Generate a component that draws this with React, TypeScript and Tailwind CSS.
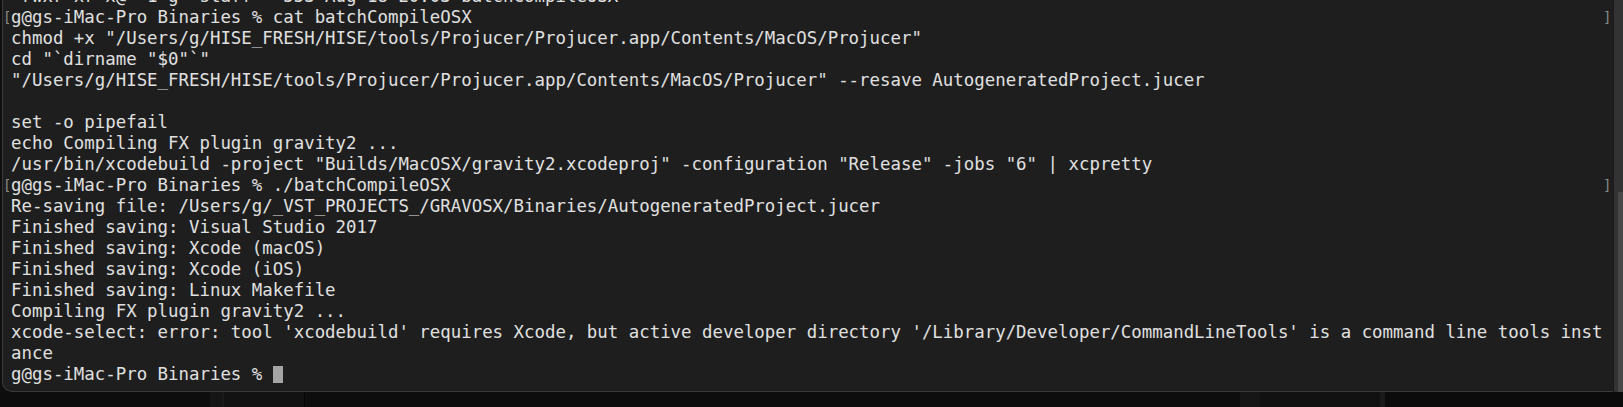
import React from 'react';

interface Line {
  text: string;
  mark?: boolean;
  cursor?: boolean;
}

const lines: Line[] = [
  { text: '-rwxr-xr-x@  1 g  staff   553 Aug 18 20:03 batchCompileOSX' },
  { text: 'g@gs-iMac-Pro Binaries % cat batchCompileOSX', mark: true },
  { text: 'chmod +x "/Users/g/HISE_FRESH/HISE/tools/Projucer/Projucer.app/Contents/MacOS/Projucer"' },
  { text: 'cd "`dirname "$0"`"' },
  {
    text: '"/Users/g/HISE_FRESH/HISE/tools/Projucer/Projucer.app/Contents/MacOS/Projucer" --resave AutogeneratedProject.jucer',
  },
  { text: '' },
  { text: 'set -o pipefail' },
  { text: 'echo Compiling FX plugin gravity2 ...' },
  {
    text: '/usr/bin/xcodebuild -project "Builds/MacOSX/gravity2.xcodeproj" -configuration "Release" -jobs "6" | xcpretty',
  },
  { text: 'g@gs-iMac-Pro Binaries % ./batchCompileOSX', mark: true },
  { text: 'Re-saving file: /Users/g/_VST_PROJECTS_/GRAVOSX/Binaries/AutogeneratedProject.jucer' },
  { text: 'Finished saving: Visual Studio 2017' },
  { text: 'Finished saving: Xcode (macOS)' },
  { text: 'Finished saving: Xcode (iOS)' },
  { text: 'Finished saving: Linux Makefile' },
  { text: 'Compiling FX plugin gravity2 ...' },
  {
    text: "xcode-select: error: tool 'xcodebuild' requires Xcode, but active developer directory '/Library/Developer/CommandLineTools' is a command line tools inst",
  },
  { text: 'ance' },
  { text: 'g@gs-iMac-Pro Binaries % ', cursor: true },
];

export default function App() {
  return (
    <div className="w-[1623px] h-[407px] bg-[#0f0f0f] overflow-hidden flex flex-col">
      <div className="h-[392px] flex">
        {/* Terminal window */}
        <div className="ml-[2px] flex-1 bg-[#1e1e1e] rounded-bl-[10px] border-l border-b border-[#3a3a3a] overflow-hidden">
          <div
            className="-mt-[14px] pl-[8px] text-[#e0e0e0] text-[17.4px] leading-[21px]"
            style={{ fontFamily: '"DejaVu Sans Mono", "Liberation Mono", monospace' }}
          >
            {lines.map((line, i) => (
              <div key={i} className="relative h-[21px] whitespace-pre">
                {line.mark && (
                  <>
                    <span className="absolute -left-[8px] top-0 text-[14px] text-[#8a8a8a]">[</span>
                    <span className="absolute left-[1592px] top-0 text-[14px] text-[#8a8a8a]">]</span>
                  </>
                )}
                {line.text}
                {line.cursor && (
                  <span className="inline-block w-[10px] h-[17px] align-[-3px] bg-[#a5a5a5]" />
                )}
              </div>
            ))}
          </div>
        </div>
        {/* Window edge at right */}
        <div className="w-[10px] flex">
          <div className="w-[1px] bg-[#1a1a1a]" />
          <div className="flex-1 flex flex-col bg-[#333333]">
            <div className="h-[192px]" />
            <div className="flex-1 ml-[4px] bg-[#484848]" />
          </div>
        </div>
      </div>
      {/* Desktop below */}
      <div className="flex-1 flex bg-[#0d0d0d]">
        <div className="w-[210px]" />
        <div className="w-[12px] bg-[#151515]" />
        <div className="w-[2px] bg-[#1b1b1b]" />
        <div className="w-[80px] bg-[#121212]" />
        <div className="w-[1px] bg-[#050505]" />
        <div className="w-[935px]" />
        <div className="w-[20px] bg-[#161616]" />
        <div className="w-[120px] bg-[#111111]" />
        <div className="w-[5px] bg-[#1a1a1a]" />
        <div className="flex-1 bg-[#0b0b0b]" />
      </div>
    </div>
  );
}
